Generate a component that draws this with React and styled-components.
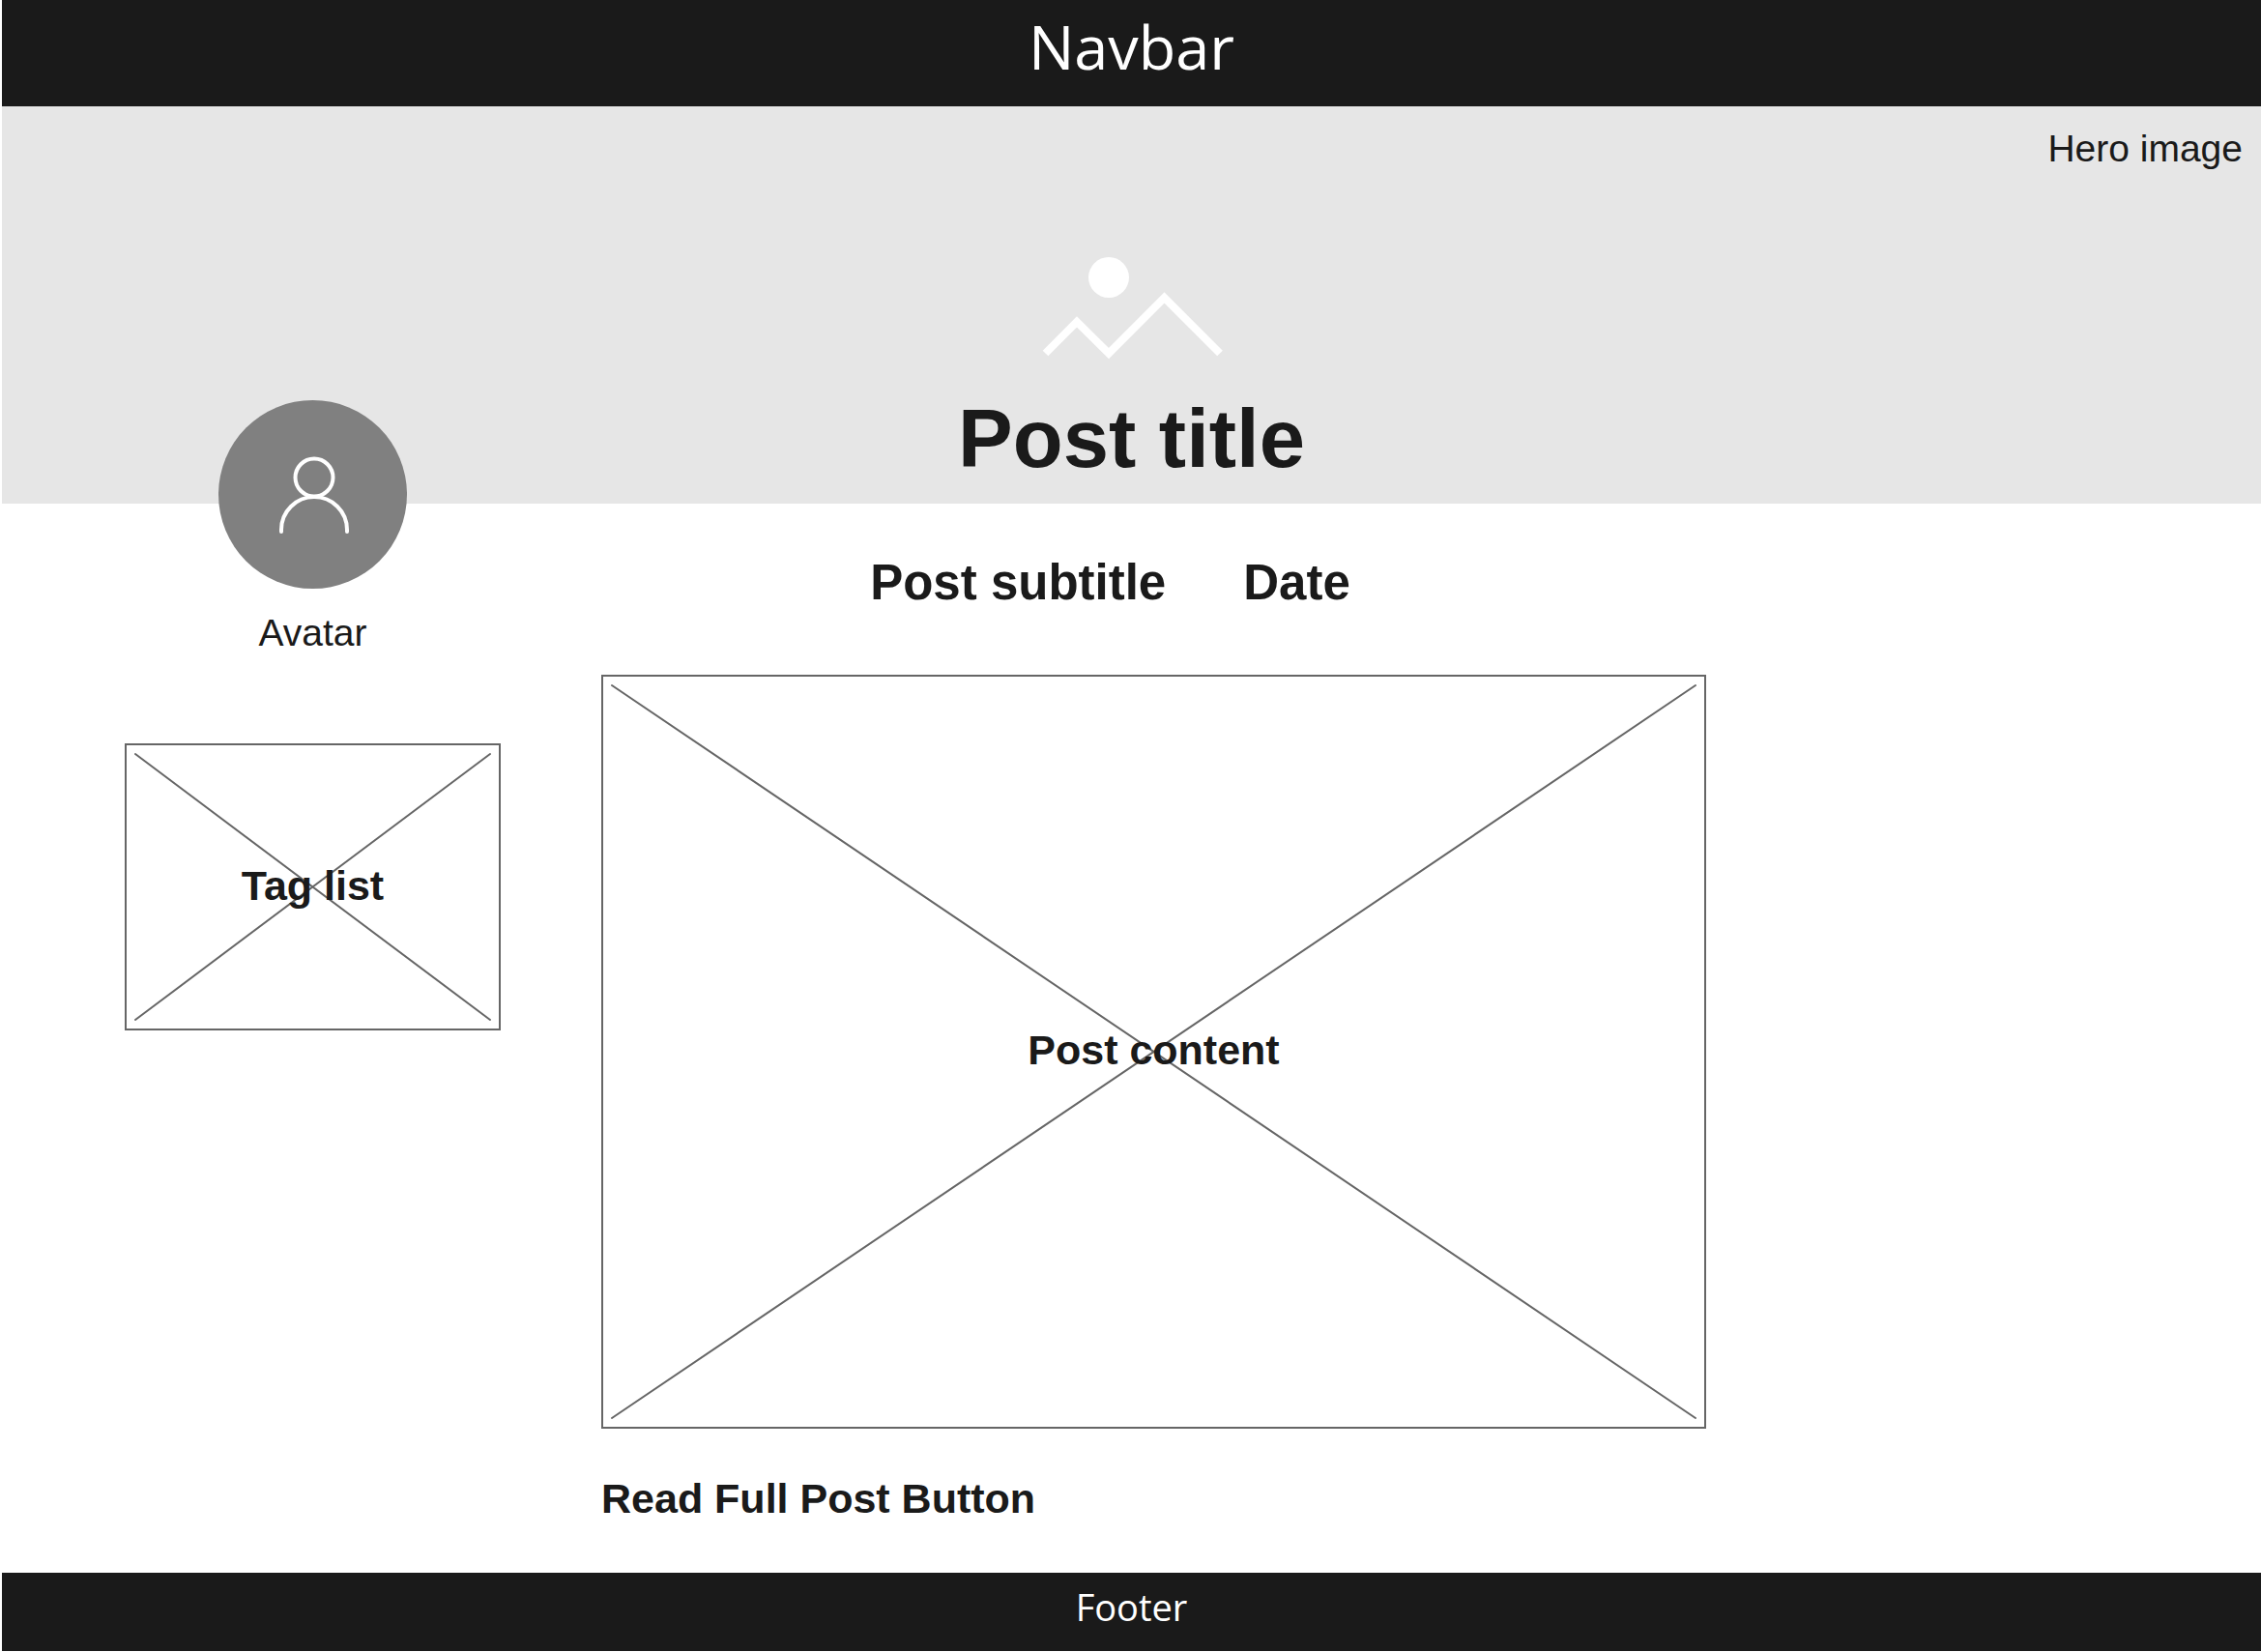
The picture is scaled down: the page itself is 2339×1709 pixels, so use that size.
import React from "react";
import styled, { createGlobalStyle } from "styled-components";

const ink = "#1a1a1a";
const line = "#666666";

const GlobalStyle = createGlobalStyle`
  *, *::before, *::after { box-sizing: border-box; }
  body {
    margin: 0;
    background: #ffffff;
    color: ${ink};
    font-family: "Liberation Sans", Arial, Helvetica, sans-serif;
  }
  h1, h2, p { margin: 0; }
`;

const Page = styled.div`
  padding-left: 2px;
`;

const Navbar = styled.header`
  padding: 4px 0 18px;
  background: ${ink};
  color: #ffffff;
  font-family: "Open Sans", "Noto Sans", sans-serif;
  font-size: 63px;
  line-height: 88px;
  text-align: center;
`;

const Hero = styled.section`
  display: flex;
  flex-direction: column;
  align-items: center;
  padding: 22px 19px 19px;
  background: #e6e6e6;
`;

const Caption = styled.p`
  align-self: ${(p) => p.$align || "center"};
  font-size: 39px;
  line-height: 44px;
`;

const HeroIcon = styled.svg`
  width: 188px;
  height: 106px;
  margin: 90px 0 34px;
`;

const Title = styled.h1`
  font-size: 85px;
  line-height: 96px;
`;

const Main = styled.main`
  display: grid;
  grid-template-columns: 389px minmax(0, 1143px);
  column-gap: 104px;
  align-items: start;
  padding: 0 127px 53px;
`;

const Sidebar = styled.aside`
  display: flex;
  flex-direction: column;
  align-items: center;
  margin-top: -107px;
`;

const Avatar = styled.div`
  display: grid;
  place-items: center;
  width: 195px;
  height: 195px;
  margin-bottom: 24px;
  border-radius: 50%;
  background: #808080;
`;

const AvatarIcon = styled.svg`
  width: 76px;
  height: 82px;
`;

const Article = styled.article`
  display: flex;
  flex-direction: column;
  align-items: flex-start;
  padding-top: 52px;
`;

const Meta = styled.div`
  display: flex;
  align-self: stretch;
  justify-content: center;
  gap: 80px;
  padding-right: 90px;
  margin-bottom: 65px;
`;

const Subtitle = styled.h2`
  font-size: 51px;
  line-height: 60px;
`;

const Placeholder = styled.section`
  display: grid;
  align-self: stretch;
  height: ${(p) => p.$height}px;
  margin-top: ${(p) => p.$gap || 0}px;
  border: 2px solid ${line};
  padding: 9px;
`;

const Cross = styled.svg`
  grid-area: 1 / 1;
  width: 100%;
  height: 100%;
  min-height: 0;
  overflow: visible;
  stroke: ${line};
  stroke-width: 2;
  stroke-linecap: round;
`;

const PlaceholderLabel = styled.h2`
  grid-area: 1 / 1;
  place-self: center;
  padding-bottom: 4px;
  font-size: 43px;
  line-height: 48px;
`;

const ReadButton = styled.button`
  margin-top: 48px;
  border: 0;
  padding: 0;
  background: none;
  color: inherit;
  font: bold 43px/48px "Liberation Sans", Arial, Helvetica, sans-serif;
  cursor: pointer;
`;

const Footer = styled.footer`
  padding: 8px 0 19px;
  background: ${ink};
  color: #ffffff;
  font-family: "Open Sans", "Noto Sans", sans-serif;
  font-size: 38px;
  line-height: 54px;
  text-align: center;
`;

function CrossedBox({ label, height, gap }) {
  return (
    <Placeholder $height={height} $gap={gap}>
      <Cross aria-hidden="true">
        <line x1="0" y1="0" x2="100%" y2="100%" />
        <line x1="100%" y1="0" x2="0" y2="100%" />
      </Cross>
      <PlaceholderLabel>{label}</PlaceholderLabel>
    </Placeholder>
  );
}

export default function App() {
  return (
    <Page>
      <GlobalStyle />
      <Navbar>Navbar</Navbar>
      <Hero>
        <Caption $align="flex-end">Hero image</Caption>
        <HeroIcon viewBox="0 0 188 106" aria-hidden="true">
          <circle cx="70" cy="21" r="21" fill="#ffffff" />
          <polyline
            points="4.5,99.5 37,67 70,99.5 127.5,42 185,99.5"
            fill="none"
            stroke="#ffffff"
            strokeWidth="8"
          />
        </HeroIcon>
        <Title>Post title</Title>
      </Hero>
      <Main>
        <Sidebar>
          <Avatar>
            <AvatarIcon
              viewBox="0 0 76 82"
              fill="none"
              stroke="#ffffff"
              strokeWidth="4"
              strokeLinecap="round"
              aria-hidden="true"
            >
              <circle cx="39" cy="23" r="19.5" />
              <path d="M5 79v-2a34 34 0 0 1 68 0v2" />
            </AvatarIcon>
          </Avatar>
          <Caption>Avatar</Caption>
          <CrossedBox label="Tag list" height={297} gap={92} />
        </Sidebar>
        <Article>
          <Meta>
            <Subtitle>Post subtitle</Subtitle>
            <Subtitle as="time">
              <b>Date</b>
            </Subtitle>
          </Meta>
          <CrossedBox label="Post content" height={780} />
          <ReadButton type="button">Read Full Post Button</ReadButton>
        </Article>
      </Main>
      <Footer>Footer</Footer>
    </Page>
  );
}
